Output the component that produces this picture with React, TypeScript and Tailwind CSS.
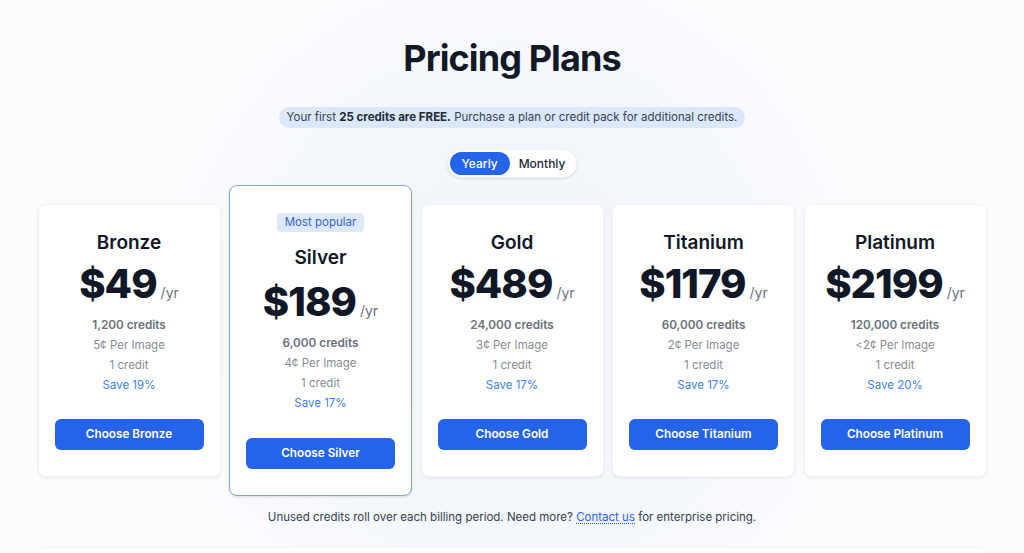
import React from "react";

const plans = [
    { name: "Bronze", price: "$49", credits: "1,200 credits", per: "5¢ Per Image", save: "Save 19%" },
    { name: "Silver", price: "$189", credits: "6,000 credits", per: "4¢ Per Image", save: "Save 17%", popular: true },
    { name: "Gold", price: "$489", credits: "24,000 credits", per: "3¢ Per Image", save: "Save 17%" },
    { name: "Titanium", price: "$1179", credits: "60,000 credits", per: "2¢ Per Image", save: "Save 17%" },
    { name: "Platinum", price: "$2199", credits: "120,000 credits", per: "<2¢ Per Image", save: "Save 20%" },
];

const PlanCard = ({ plan }: any) => {
    return (
        <div
            className={`flex flex-col items-center rounded-lg bg-white px-4 pt-6 ${
                plan.popular
                    ? "border border-[#7ea4f0] pb-[26px] shadow-sm"
                    : "border border-gray-100 pb-[26px] shadow-[0_1px_3px_rgba(15,23,42,0.08)]"
            }`}
        >
            {plan.popular && (
                <span className="mt-[3px] mb-3 flex h-[19px] items-center rounded bg-[#dbe8fe] px-2 text-[11.5px] text-[#3b62c4]">
                    Most popular
                </span>
            )}
            <h2 className="text-[19px] font-semibold leading-7 text-gray-900">{plan.name}</h2>
            <div className={`flex items-baseline ${plan.popular ? "mt-[8px]" : "mt-[5px]"}`}>
                <span className="text-[40px] font-extrabold leading-[44px] tracking-tight text-gray-900">{plan.price}</span>
                <span className="ml-1 text-[14px] text-gray-500">/yr</span>
            </div>
            <div className="mt-[9px] flex flex-col items-center text-[11.5px] leading-5">
                <p className="text-[11.75px] font-semibold text-[#6b7280]">{plan.credits}</p>
                <p className="text-[#878c95]">{plan.per}</p>
                <p className="text-[#878c95]">1 credit</p>
                <p className="text-[#3b82f6]">{plan.save}</p>
            </div>
            <button className={`${plan.popular ? "mt-[25px]" : "mt-6"} h-[31px] w-full rounded-md bg-[#2563eb] text-[11.75px] font-semibold text-white`}>
                Choose {plan.name}
            </button>
        </div>
    );
};

export default function App() {
    return (
        <div
            className="min-h-screen overflow-hidden bg-[radial-gradient(circle_at_50%_48%,#f1f5fb_0%,#f4f7fc_38%,#fcfcfe_62%)] text-gray-900"
            style={{ fontFamily: "Inter, 'Noto Sans', sans-serif" }}
        >
            <div className="mx-auto flex w-[949px] flex-col items-center pt-[34px]">
                <h1 className="text-[36px] font-bold leading-[48px] tracking-tight text-[#111827]">Pricing Plans</h1>

                <p className="mt-[25px] flex h-[21px] items-center rounded-full bg-[#dbe7fb] px-2 text-[11.5px] text-gray-700">
                    Your first&nbsp;<span className="font-bold text-gray-800">25 credits are FREE.</span>&nbsp;Purchase a plan or credit pack for additional credits.
                </p>

                <div className="mt-[21px] flex h-[29px] items-center rounded-full border border-gray-100 bg-white p-[2px] pr-[11px] shadow-sm">
                    <button className="flex h-[23px] w-[60px] items-center justify-center rounded-full bg-[#2563eb] text-[12px] font-medium text-white">
                        Yearly
                    </button>
                    <button className="ml-[9px] flex h-[23px] items-center text-[12px] font-medium text-gray-800">Monthly</button>
                </div>

                <div className="mt-[7px] grid w-full grid-cols-5 items-center gap-[8.5px]">
                    {plans.map((plan) => (
                        <PlanCard key={plan.name} plan={plan} />
                    ))}
                </div>

                <p className="mt-[11px] text-[11.5px] leading-5 text-gray-700">
                    Unused credits roll over each billing period. Need more?{" "}
                    <a className="text-[#2563eb] underline decoration-dotted underline-offset-2" href="#">
                        Contact us
                    </a>{" "}
                    for enterprise pricing.
                </p>

                <div className="mt-5 h-24 w-full rounded-lg border border-gray-100 bg-white" />
            </div>
        </div>
    );
}
